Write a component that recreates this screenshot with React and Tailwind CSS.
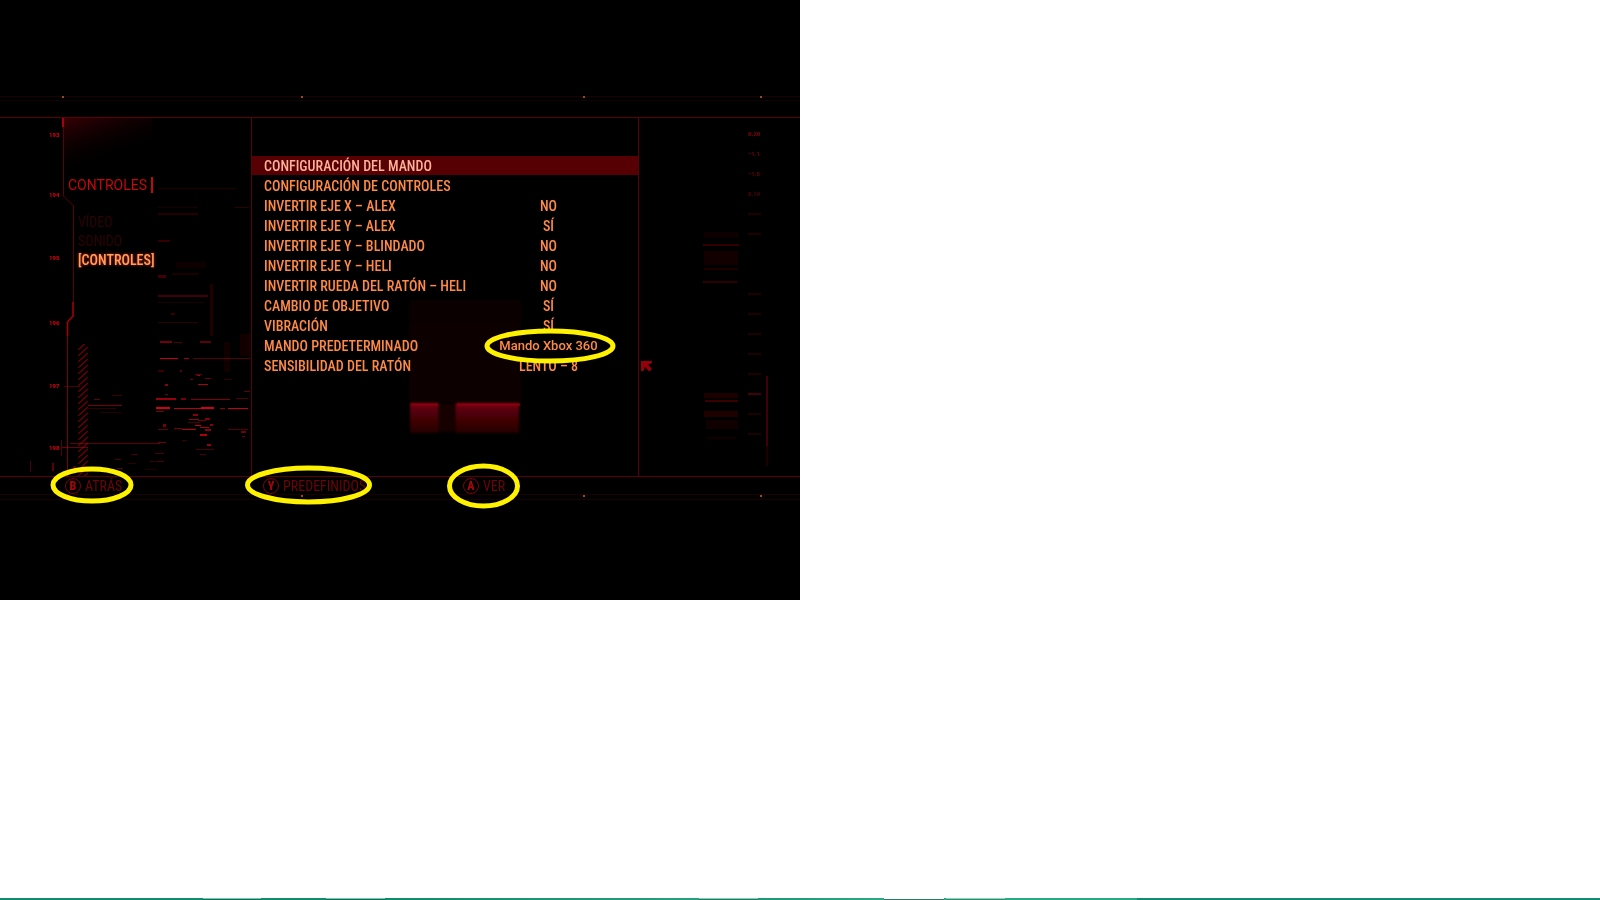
const settings = [
  ["CONFIGURACIÓN DEL MANDO", ""],
  ["CONFIGURACIÓN DE CONTROLES", ""],
  ["INVERTIR EJE X – ALEX", "NO"],
  ["INVERTIR EJE Y – ALEX", "SÍ"],
  ["INVERTIR EJE Y – BLINDADO", "NO"],
  ["INVERTIR EJE Y – HELI", "NO"],
  ["INVERTIR RUEDA DEL RATÓN – HELI", "NO"],
  ["CAMBIO DE OBJETIVO", "SÍ"],
  ["VIBRACIÓN", "SÍ"],
  ["MANDO PREDETERMINADO", "Mando Xbox 360"],
  ["SENSIBILIDAD DEL RATÓN", "LENTO – 8"],
];

// x, y, width, height, opacity
const glitches = [
  [158, 188, 78, 1, 0.14], [158, 213, 40, 2, 0.16], [235, 207, 14, 1, 0.18], [158, 207, 40, 1, 0.1],
  [158, 240, 12, 2, 0.22], [176, 262, 30, 6, 0.06], [158, 275, 8, 3, 0.28], [172, 273, 26, 2, 0.12],
  [158, 295, 50, 2, 0.28], [210, 284, 3, 52, 0.14], [158, 302, 46, 1, 0.12], [171, 313, 4, 2, 0.25],
  [158, 322, 40, 1, 0.18], [160, 341, 12, 2, 0.5], [174, 342, 8, 1, 0.35], [200, 341, 11, 2, 0.4],
  [160, 358, 18, 1, 0.85], [184, 358, 5, 1, 0.7], [193, 358, 57, 1, 0.35], [224, 342, 6, 30, 0.07],
  [240, 334, 10, 22, 0.08], [158, 370, 6, 2, 0.25], [180, 370, 2, 2, 0.4], [195, 374, 7, 1, 0.4],
  [190, 379, 3, 1, 0.5], [197, 375, 3, 1, 0.7], [205, 378, 6, 1, 0.45], [198, 384, 10, 1, 0.75],
  [165, 384, 3, 2, 0.6], [165, 394, 3, 1, 0.5], [244, 391, 6, 1, 0.4], [224, 379, 8, 1, 0.2],
  [156, 398, 20, 2, 0.65], [181, 398, 5, 2, 0.5], [191, 399, 39, 1, 0.55], [236, 398, 12, 1, 0.35],
  [156, 407, 14, 2, 0.9], [156, 411, 8, 1, 0.5], [174, 408, 30, 1, 0.8], [201, 407, 13, 2, 0.9],
  [220, 408, 5, 1, 0.6], [228, 408, 20, 1, 0.85], [193, 414, 5, 2, 0.6], [189, 419, 10, 1, 0.65],
  [198, 420, 8, 1, 0.45], [205, 418, 5, 2, 0.55], [188, 422, 12, 1, 0.3], [163, 424, 3, 3, 0.5],
  [158, 429, 10, 1, 0.4], [174, 428, 8, 1, 0.5], [182, 429, 14, 1, 0.8], [195, 425, 6, 1, 0.85],
  [200, 427, 9, 1, 0.7], [210, 424, 3, 2, 0.6], [205, 429, 6, 2, 0.6], [228, 429, 20, 1, 0.35],
  [200, 434, 7, 2, 0.75], [241, 431, 5, 2, 0.5], [242, 436, 3, 1, 0.45], [182, 440, 5, 1, 0.25],
  [158, 442, 8, 1, 0.45], [207, 444, 4, 2, 0.65], [196, 449, 18, 1, 0.3], [155, 453, 9, 1, 0.3],
  [200, 454, 6, 1, 0.3], [156, 461, 8, 1, 0.3], [131, 454, 7, 1, 0.3], [115, 459, 6, 1, 0.35],
  [128, 463, 8, 1, 0.2], [117, 468, 6, 1, 0.4], [150, 461, 5, 1, 0.25], [145, 469, 12, 1, 0.15],
  [88, 405, 34, 1, 0.5], [88, 408, 28, 1, 0.2], [94, 399, 6, 1, 0.4], [112, 395, 10, 1, 0.25],
  [100, 412, 22, 1, 0.15], [70, 443, 90, 1, 0.4], [64, 386, 16, 1, 0.3], [62, 447, 26, 1, 0.45],
  [61, 440, 1, 16, 0.35], [30, 461, 1, 11, 0.3], [52, 463, 2, 8, 0.4], [73, 466, 3, 6, 0.35],
  [704, 232, 34, 6, 0.05], [703, 244, 36, 2, 0.22], [704, 251, 34, 14, 0.08], [704, 268, 34, 2, 0.12],
  [703, 281, 34, 2, 0.2], [704, 393, 34, 5, 0.12], [705, 400, 33, 2, 0.25], [704, 411, 34, 6, 0.13],
  [706, 420, 32, 9, 0.07], [706, 437, 30, 2, 0.08], [766, 376, 2, 70, 0.28], [766, 446, 2, 20, 0.12],
];

const leftScale = [["193", 135], ["194", 195], ["195", 258], ["196", 323], ["197", 386], ["198", 448]];
const rightScale = [["0.20", 134, 0.6], ["−1.1", 154, 0.5], ["−1.5", 174, 0.45], ["0.10", 194, 0.35]];
const rightTicks = [214, 234, 294, 314, 334, 354, 374, 394, 414, 434];

function Backdrop() {
  return (
    <svg aria-hidden="true" viewBox="0 0 800 600" preserveAspectRatio="none" className="absolute inset-0 h-full w-full">
      <defs>
        <linearGradient id="haze" x1="0" y1="0" x2="0.5" y2="1">
          <stop offset="0" stopColor="#360004" />
          <stop offset="0.8" stopColor="#000" stopOpacity="0" />
        </linearGradient>
        <linearGradient id="bar" x1="0" y1="0" x2="0" y2="1">
          <stop offset="0" stopColor="#7c000e" />
          <stop offset="0.25" stopColor="#560008" />
          <stop offset="1" stopColor="#240003" />
        </linearGradient>
        <linearGradient id="column" x1="0" y1="0" x2="0" y2="1">
          <stop offset="0" stopColor="#0a0001" stopOpacity="0" />
          <stop offset="1" stopColor="#110002" />
        </linearGradient>
        <pattern id="hatch" width="10" height="6" patternUnits="userSpaceOnUse" x="78" y="344">
          <path d="M0 6L10 -3M0 12L10 3" stroke="#6d0006" strokeWidth="1.3" />
        </pattern>
        <filter id="soft"><feGaussianBlur stdDeviation="1" /></filter>
        <filter id="glow"><feGaussianBlur stdDeviation="0.5" /></filter>
      </defs>

      <path d="M0 96.5H800M0 494.5H800M0 499.5H800" stroke="#1c0003" />
      <path d="M0 100.5H800" stroke="#120303" />
      <g fill="#9a4a18">
        {[63, 302, 584, 761].map((x) => <rect key={x} x={x - 1} y="96" width="2" height="2" />)}
        {[302, 584, 761].map((x) => <rect key={x} x={x - 1} y="495" width="2" height="2" />)}
      </g>

      <rect x="64" y="118" width="88" height="60" fill="url(#haze)" />
      <rect x="409" y="200" width="112" height="203" fill="url(#column)" filter="url(#soft)" />
      <g filter="url(#soft)">
        <rect x="410" y="403" width="28" height="30" fill="url(#bar)" />
        <rect x="438" y="404" width="18" height="28" fill="#120002" />
        <rect x="456" y="403" width="63" height="30" fill="url(#bar)" />
      </g>
      <path d="M411 404.5H438M457 404.5H520" stroke="#8a0012" strokeWidth="2" />

      <path d="M63.5 118V196L73.5 206V302" fill="none" stroke="#5c0007" />
      <path d="M73 302V316L67.5 322V336" fill="none" stroke="#a00008" strokeWidth="1.6" />
      <path d="M67.5 336V476" stroke="#7a0007" />
      <rect x="62" y="118" width="2" height="9" fill="#a80010" />
      <rect x="78" y="344" width="10" height="132" fill="url(#hatch)" />

      <g fill="#e80014" filter="url(#glow)">
        {glitches.map(([x, y, w, h, o], i) => <rect key={i} x={x} y={y} width={w} height={h} opacity={o} />)}
        {rightTicks.map((y) => <rect key={y} x="748" y={y - 1} width="13" height="2" opacity={y === 394 ? 0.3 : 0.13} />)}
      </g>

      <g fill="#c80012" fontFamily="Roboto, sans-serif" fontSize="6" fontWeight="900">
        {leftScale.map(([t, y]) => <text key={t} x="49" y={y + 2}>{t}</text>)}
        {rightScale.map(([t, y, o]) => <text key={t} x="748" y={y + 2} opacity={o}>{t}</text>)}
      </g>
    </svg>
  );
}

function Annotations() {
  return (
    <svg aria-hidden="true" viewBox="0 0 800 600" preserveAspectRatio="none" className="pointer-events-none absolute inset-0 h-full w-full">
      <path d="M641 361H652V363L648 364.500L652 369L649.500 371.500L645 367L643.500 371H641Z" fill="#96000a" />
      <g fill="none" stroke="#fff200" strokeWidth="5">
        <ellipse cx="92" cy="485" rx="39" ry="16" />
        <ellipse cx="308.500" cy="485" rx="61" ry="17" />
        <ellipse cx="483.500" cy="486" rx="34" ry="20" />
        <ellipse cx="550" cy="346" rx="63" ry="15" />
      </g>
    </svg>
  );
}

function PadButton({ letter, label }) {
  return (
    <button type="button" className="flex items-center gap-1 text-sm leading-4 text-[#6c0508]">
      <span className="flex size-4 items-center justify-center rounded-full border border-[#7a0508] text-xs font-black text-[#a0060a]">{letter}</span>
      {label}
    </button>
  );
}

export default function App() {
  return (
    <div className="flex min-h-screen flex-col bg-white">
      <main className="relative grid aspect-[4/3] w-1/2 grid-rows-[117px_360px_1fr] overflow-hidden bg-black font-['Roboto_Condensed','Roboto',sans-serif]">
        <Backdrop />
        <div />
        <div className="relative grid grid-cols-[251fr_388fr_161fr] border-y border-[#5a0007]">
          <nav className="pt-[55px]">
            <h1 className="flex items-center gap-1 pl-[68px] font-['Roboto',sans-serif] text-sm leading-6 text-[#c4080c]">
              CONTROLES
              <span className="h-4 w-0.5 bg-[#c4080c]" />
            </h1>
            <ul className="pt-4 pl-[78px] text-sm leading-[19px]">
              <li><a href="#video" className="text-[#2e0204]">VÍDEO</a></li>
              <li><a href="#sonido" className="text-[#2e0204]">SONIDO</a></li>
              <li><a href="#controles" className="font-medium text-[#ffa060] [text-shadow:0_0_3px_#e03000]">[CONTROLES]</a></li>
            </ul>
          </nav>
          <section className="border-x border-[#5a0007] pt-[38px]">
            <ul className="text-sm font-medium text-[#ff8a48] [text-shadow:0_0_3px_#c02800]">
              {settings.map(([label, value], i) => (
                <li key={label}>
                  <button type="button" className={i === 0 ? "mb-px grid h-[19px] w-full grid-cols-[210fr_177fr] items-center bg-[#560003] pl-3 text-left text-[#ffb098]" : "grid h-5 w-full grid-cols-[210fr_177fr] items-center pl-3 text-left"}>
                    <span className="whitespace-nowrap">{label}</span>
                    <span className={value.startsWith("Mando") ? "pr-2 text-center font-['Roboto',sans-serif] text-[13px]" : "pr-2 text-center"}>{value}</span>
                  </button>
                </li>
              ))}
            </ul>
          </section>
        </div>
        <footer className="relative grid grid-cols-[198fr_200fr_337fr] items-start pt-px pl-[65px]">
          <PadButton letter="B" label="ATRÁS" />
          <PadButton letter="Y" label="PREDEFINIDOS" />
          <PadButton letter="A" label="VER" />
        </footer>
        <Annotations />
      </main>
      <div className="mt-auto grid h-0.5 grid-cols-[203fr_58fr_65fr_59fr_314fr_59fr_126fr_60fr_2fr_59fr_132fr_463fr] bg-linear-to-r from-[#128a70] via-[#259c7e] to-[#128a74]">
        <span className="bg-[#128a70]" />
        <span className="border-t border-[#7cc6ad] bg-[#08735a]" />
        <span className="bg-[#128a6c]" />
        <span className="border-t border-[#7cc6ad] bg-[#08735a]" />
        <span className="bg-linear-to-r from-[#0f8a6a] to-[#2a9f80]" />
        <span className="border-t border-[#8accb4] bg-[#1a7e64]" />
        <span className="bg-linear-to-r from-[#1f9676] to-[#2fa684]" />
        <span className="border-t border-white bg-[#2a7a66]" />
        <span className="bg-[#2aa582]" />
        <span className="border-t border-[#93d2ba] bg-[#28906f]" />
        <span className="bg-[#2ba783]" />
        <span className="bg-[#128a74]" />
      </div>
    </div>
  );
}
